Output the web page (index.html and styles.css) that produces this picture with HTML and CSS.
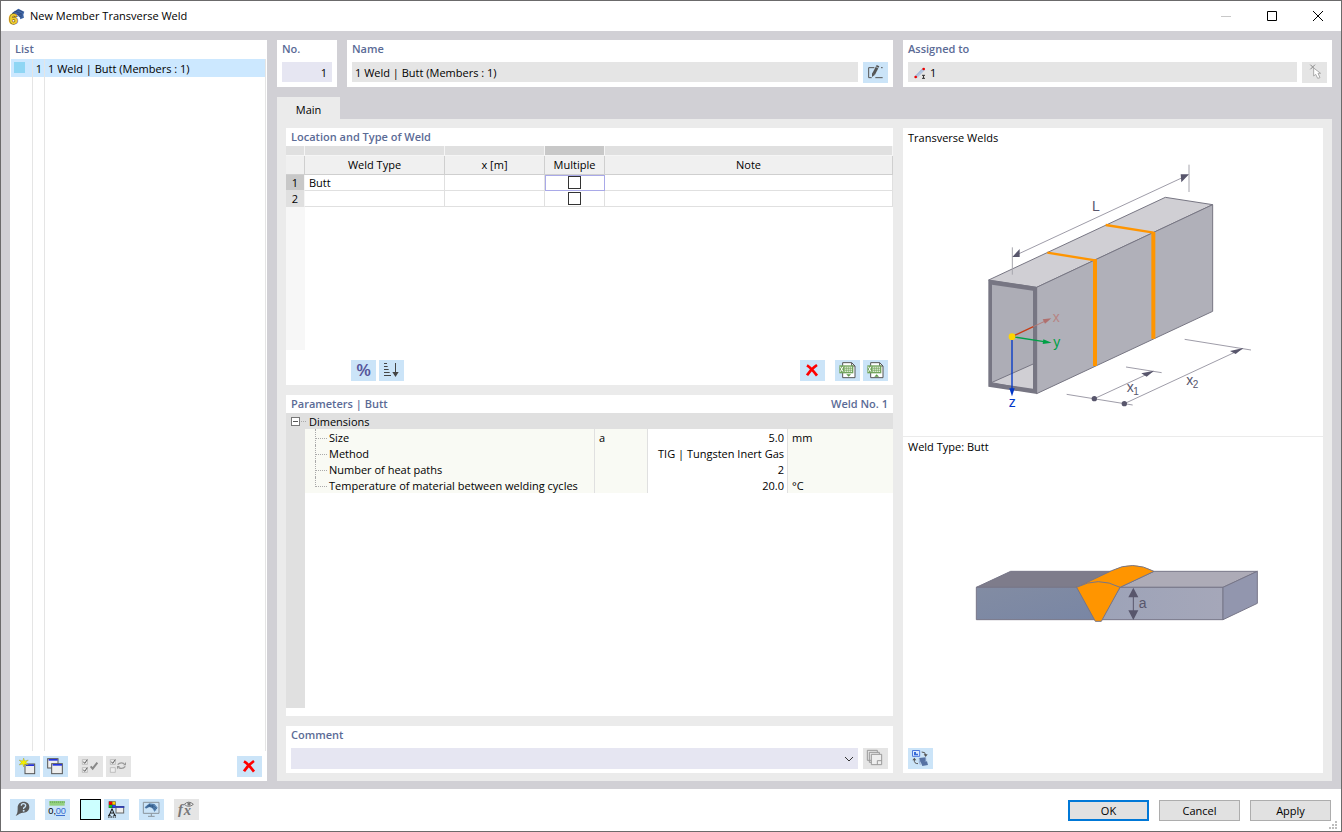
FILE: index.html
```html
<!DOCTYPE html>
<html lang="en">
<head>
  <meta charset="UTF-8" />
  <meta name="viewport" content="width=device-width, initial-scale=1.0" />
  <title>New Member Transverse Weld</title>
  <link rel="stylesheet" href="styles.css">
</head>
<body>

<!-- shared icon shapes, 3 units per pixel -->
<svg class="defs" width="0" height="0" aria-hidden="true">
  <symbol id="iconDelete" viewBox="0 0 75 63">
    <path d="M21 16Q34 24 51 47M51 15Q34 26 21 46" fill="none" stroke="#f00" stroke-width="8"/>
  </symbol>
  <symbol id="iconSheet" viewBox="0 0 75 63">
    <path d="M23 8H50L60 18V53H23Z" fill="#fff" stroke="#555" stroke-width="3"/>
    <path d="M50 8V18H60" fill="none" stroke="#555" stroke-width="3"/>
    <rect x="13" y="16" width="42" height="24" fill="#72a45c"/>
    <path d="M16 20L24 35M24 20L16 35" stroke="#fff" stroke-width="3"/>
    <path d="M29 20H51V36H29Z" fill="#e6f2df"/>
    <path d="M34 20V36M40 20V36M46 20V36M29 25H51M29 31H51" stroke="#72a45c" stroke-width="2"/>
  </symbol>
</svg>

<div class="window">

  <header class="titlebar">
    <svg class="app-icon" viewBox="0 0 48 48" aria-hidden="true">
      <path d="M9 15L28 2L46 11L43 20L45 29L34 34Q32 18 9 19Z" fill="#4169aa"/>
      <path d="M12 14L30 6L42 13M24 18L40 22M27 23L40 28M17 10L39 18" fill="none" stroke="#28406e" stroke-width="2"/>
      <text x="1" y="47" class="app-digit">6</text>
    </svg>
    <h1>New Member Transverse Weld</h1>
    <div class="window-buttons">
      <button type="button" aria-label="Minimize" disabled><svg viewBox="0 0 10 10"><path d="M0 5.5H10" stroke="#c8c8c8"/></svg></button>
      <button type="button" aria-label="Maximize"><svg viewBox="0 0 10 10"><path d="M.5 .5H9.5V9.5H.5Z" fill="none" stroke="#000"/></svg></button>
      <button type="button" aria-label="Close"><svg viewBox="0 0 10 10"><path d="M0 0L10 10M10 0L0 10" stroke="#000"/></svg></button>
    </div>
  </header>

  <main class="content">

    <section class="panel list-panel">
      <h2>List</h2>
      <div class="list">
        <div class="list-row selected">
          <span class="swatch-cell"><span class="swatch"></span></span>
          <span class="list-no">1</span>
          <span class="list-name">1 Weld | Butt (Members : 1)</span>
        </div>
        <div class="list-row filler"><span class="swatch-cell"></span><span class="list-no"></span><span class="list-name"></span></div>
      </div>
      <div class="toolbar">
        <button type="button" class="tool" aria-label="New"><svg viewBox="0 0 75 63">
          <rect x="30" y="24" width="29" height="29" fill="#eee" stroke="#555" stroke-width="3"/>
          <path d="M33 27.500H57" stroke="#2434e0" stroke-width="5"/>
          <path d="M26 6L29 15L40 12L33 19L40 27L29 24L26 33L23 24L12 27L19 19L12 12L23 15Z" fill="#f4f000" stroke="#8c8a30" stroke-width="1"/>
        </svg></button>
        <button type="button" class="tool" aria-label="Copy"><svg viewBox="0 0 75 63">
          <rect x="14" y="8" width="31" height="28" fill="#eee" stroke="#555" stroke-width="3"/>
          <path d="M17 11.500H44" stroke="#2434e0" stroke-width="5"/>
          <rect x="26" y="23" width="32" height="30" fill="#eee" stroke="#555" stroke-width="3"/>
          <path d="M29 26.500H57" stroke="#2434e0" stroke-width="5"/>
        </svg></button>
        <button type="button" class="tool off push" aria-label="Select all" disabled><svg viewBox="0 0 75 63">
          <path d="M13 11H28V25H13ZM13 35H28V49H13Z" fill="#eee" stroke="#aaa" stroke-width="2"/>
          <path d="M16 17L20 22L28 11M16 41L20 46L28 35" fill="none" stroke="#555" stroke-width="3"/>
          <path d="M38 31L44 38L58 20" fill="none" stroke="#888" stroke-width="6"/>
        </svg></button>
        <button type="button" class="tool off" aria-label="Invert selection" disabled><svg viewBox="0 0 75 63">
          <path d="M13 11H28V25H13ZM13 35H28V49H13Z" fill="#eee" stroke="#aaa" stroke-width="2"/>
          <path d="M16 17L20 22L28 11" fill="none" stroke="#555" stroke-width="3"/>
          <path d="M35 26Q43 17 54 23M58 31Q50 41 38 35" fill="none" stroke="#999" stroke-width="4"/>
          <path d="M51 28H60V18ZM42 30H33V40Z" fill="#999"/>
        </svg></button>
        <button type="button" class="tool last" aria-label="Delete"><svg><use href="#iconDelete"/></svg></button>
      </div>
    </section>

    <div class="detail">

      <div class="fields">
        <section class="panel field">
          <h2><label for="no">No.</label></h2>
          <div class="field-row"><input type="text" id="no" class="box number" value="1"></div>
        </section>
        <section class="panel field">
          <h2><label for="name">Name</label></h2>
          <div class="field-row">
            <input type="text" id="name" class="box readonly" value="1 Weld | Butt (Members : 1)" readonly>
            <button type="button" class="tool" aria-label="Edit name"><svg viewBox="0 0 75 63">
              <path d="M34 17H17V47H26M37 47H59M54 17H59" fill="none" stroke="#555" stroke-width="3"/>
              <path d="M32 36L45 11" stroke="#555" stroke-width="9"/>
              <path d="M27 32L36 38L27 45Z" fill="#555"/>
              <path d="M38 14L48 19" stroke="#cbe4f8" stroke-width="2"/>
            </svg></button>
          </div>
        </section>
        <section class="panel field">
          <h2><label for="assigned">Assigned to</label></h2>
          <div class="field-row">
            <div class="box readonly with-icon">
              <svg class="member-icon" viewBox="0 0 42 42" aria-hidden="true">
                <path d="M9 33L33 9" stroke="#b4c6e0" stroke-width="9"/>
                <path d="M9 29L29 8" stroke="#8aa3c8" stroke-width="2"/>
                <circle cx="8" cy="33" r="4" fill="#e00"/><circle cx="32" cy="9" r="4" fill="#e00"/>
                <path d="M27 28H36M27 37H36M31.500 28V37" stroke="#333" stroke-width="3"/>
              </svg>
              <input type="text" id="assigned" value="1" readonly>
            </div>
            <button type="button" class="tool off" aria-label="Select in model" disabled><svg viewBox="0 0 75 63">
              <path d="M25 8L39 22M39 8L25 22" stroke="#888" stroke-width="3"/>
              <path d="M35 18V42L41 37L47 49L54 47L48 34H56Z" fill="#fff" stroke="#aaa" stroke-width="3"/>
            </svg></button>
          </div>
        </section>
      </div>

      <nav class="tabs"><button type="button" class="tab">Main</button></nav>

      <div class="tab-page">

        <div class="column">
          <section class="panel">
            <h2 class="tight">Location and Type of Weld</h2>
            <div class="grid-area">
              <table class="weld-table">
                <colgroup><col class="c-row"><col class="c-type"><col class="c-x"><col class="c-multi"><col></colgroup>
                <thead>
                  <tr class="strip"><td></td><td></td><td></td><td class="active"></td><td></td></tr>
                  <tr><th></th><th>Weld Type</th><th>x [m]</th><th>Multiple</th><th>Note</th></tr>
                </thead>
                <tbody>
                  <tr><th class="active">1</th><td>Butt</td><td></td><td class="check current"><input type="checkbox" aria-label="Multiple, row 1"></td><td></td></tr>
                  <tr><th>2</th><td></td><td></td><td class="check"><input type="checkbox" aria-label="Multiple, row 2"></td><td></td></tr>
                </tbody>
              </table>
            </div>
            <div class="toolbar table-tools">
              <button type="button" class="tool percent" aria-label="Relative">%</button>
              <button type="button" class="tool" aria-label="Sort"><svg viewBox="0 0 75 63">
                <path d="M15 10.500H24M15 19.500H26M15 28.500H29M15 37.500H32M15 46.500H36" stroke="#444" stroke-width="3"/>
                <path d="M49.500 9V42" stroke="#444" stroke-width="3"/><path d="M40 36H59L49.500 51Z" fill="#444"/>
              </svg></button>
              <button type="button" class="tool last" aria-label="Delete row"><svg><use href="#iconDelete"/></svg></button>
              <button type="button" class="tool push" aria-label="Export table"><svg viewBox="0 0 75 63"><use href="#iconSheet"/><path d="M34 43H48L41 50Z" fill="#5d9646"/></svg></button>
              <button type="button" class="tool" aria-label="Import table"><svg viewBox="0 0 75 63"><use href="#iconSheet"/><path d="M34 50H48L41 43Z" fill="#5d9646"/></svg></button>
            </div>
          </section>

          <section class="panel params">
            <h2 class="tight">Parameters | Butt <span>Weld No. 1</span></h2>
            <div class="params-area">
              <div class="group">
                <button type="button" class="collapse" aria-label="Collapse"></button>
                <span class="dots"></span>Dimensions
              </div>
              <table class="param-table">
                <colgroup><col><col class="c-symbol"><col class="c-value"><col class="c-unit"></colgroup>
                <tbody>
                  <tr><th>Size</th><td>a</td><td class="value">5.0</td><td>mm</td></tr>
                  <tr><th>Method</th><td></td><td class="value">TIG | Tungsten Inert Gas</td><td></td></tr>
                  <tr><th>Number of heat paths</th><td></td><td class="value">2</td><td></td></tr>
                  <tr><th>Temperature of material between welding cycles</th><td></td><td class="value">20.0</td><td>°C</td></tr>
                </tbody>
              </table>
            </div>
          </section>

          <section class="panel comment">
            <h2><label for="comment">Comment</label></h2>
            <div class="field-row">
              <div class="combo">
                <select id="comment"><option></option></select>
                <svg class="chevron" viewBox="0 0 10 6" aria-hidden="true"><path d="M1 1L5 5L9 1" fill="none" stroke="#333"/></svg>
              </div>
              <button type="button" class="tool off" aria-label="Comment templates" disabled><svg viewBox="0 0 75 63">
                <path d="M24 37H13V7H43V13M28 43H19V13H49V19" fill="none" stroke="#999" stroke-width="3"/>
                <path d="M25 19H56V50H25Z" fill="#eee" stroke="#999" stroke-width="3"/>
                <path d="M43 50V38H56" fill="none" stroke="#999" stroke-width="3"/>
              </svg></button>
            </div>
          </section>
        </div>

        <section class="panel pictures">
          <div class="picture top-picture">
            <h3>Transverse Welds</h3>
            <svg class="member-drawing" viewBox="-21 0 900 810" role="img" aria-label="Member with transverse welds">
              <g stroke="#777683" stroke-width="3" stroke-linejoin="round">
                <path d="M56 390L586 142L728 164L200 412Z" fill="#d0cfd4"/>
                <path d="M200 412L728 164V484L200 731Z" fill="#b0b0b9"/>
                <path d="M60 398L194 416V724L60 706Z" fill="#adadb6"/>
                <path d="M64 698L194 640V722Z" fill="#d0cfd4"/>
              </g>
              <path d="M55 389L201 411V732L55 710ZM66 404V699L189 716V422Z" fill="#777683" fill-rule="evenodd"/>
              <g fill="none" stroke="#ff9500">
                <path d="M232 308L376 331M407 225L551 248" stroke-width="7"/>
                <path d="M375 328V648M550 246V566" stroke-width="12"/>
              </g>
              <g fill="none" stroke="#a7a6ae" stroke-width="3">
                <path d="M127 292V374M657 44V126"/>
              </g>
              <g fill="none" stroke="#6c6a7b" stroke-width="2">
                <path d="M132 318L652 76"/>
                <path d="M290 733L488 765M468 651L575 668M644 568L843 600"/>
                <path d="M373 746L548 665M463 761L818 596"/>
              </g>
              <g fill="#58566c">
                <path d="M127 321L149 297V321ZM657 73L632 73L634 97Z"/>
                <path d="M552 662L514 670L530 680ZM820 594L780 603L797 612Z"/>
                <circle cx="373" cy="746" r="8"/><circle cx="463" cy="761" r="8"/>
              </g>
              <path d="M126 560L190 530" stroke="#c83c14" stroke-width="4"/>
              <path d="M190 530L226 513" stroke="#b47a78" stroke-width="3"/><path d="M244 505L218 508L225 521Z" fill="#b0706e"/>
              <path d="M126 560L222 575" stroke="#00a046" stroke-width="4"/><path d="M245 578L220 568L218 582Z" fill="#00a046"/>
              <path d="M126 560V720" stroke="#0037c8" stroke-width="4"/><path d="M126 739L118 715H134Z" fill="#0037c8"/>
              <circle cx="126" cy="560" r="10" fill="#ffd500"/>
              <g class="label">
                <text x="366" y="184">L</text>
                <text x="470" y="727">x</text><text x="490" y="736" class="sub">1</text>
                <text x="649" y="704">x</text><text x="668" y="713" class="sub">2</text>
                <text x="248" y="515" class="axis" fill="#b78583">x</text>
                <text x="250" y="592" class="axis" fill="#00a046">y</text>
                <text x="116" y="770" class="axis" fill="#0037c8">z</text>
              </g>
            </svg>
          </div>
          <div class="picture bottom-picture">
            <h3>Weld Type: Butt</h3>
            <svg class="weld-drawing" viewBox="-6 33 930 300" role="img" aria-label="Butt weld section">
              <defs>
                <linearGradient id="leftFace" x1="0" y1="0" x2="1" y2="1"><stop offset="0" stop-color="#828ca3"/><stop offset="1" stop-color="#7986a4"/></linearGradient>
                <linearGradient id="rightFace" x1="0" y1="0" x2="1" y2="0"><stop offset="0" stop-color="#9da3b8"/><stop offset="1" stop-color="#a5a7b9"/></linearGradient>
              </defs>
              <g stroke="#777688" stroke-width="3" stroke-linejoin="round">
                <path d="M49 142L152 94H470L350 142Z" fill="#7e7c8b"/>
                <path d="M49 142H350L408 239H49Z" fill="url(#leftFace)"/>
                <path d="M480 142L582 94H892L789 142Z" fill="#adabb7"/>
                <path d="M480 142H789V239H424Z" fill="url(#rightFace)"/>
                <path d="M789 142L892 94V190L789 239Z" fill="#9296ae"/>
                <path d="M350 142L455 92Q518 60 582 94L480 142Z" fill="#ff9500"/>
                <path d="M350 142Q415 108 480 142L424 244H406Z" fill="#ff9500"/>
              </g>
              <path d="M520 165V218" stroke="#58566c" stroke-width="3"/>
              <path d="M520 143L535 172H505ZM520 240L535 211H505Z" fill="#58566c"/>
              <text x="536" y="203" class="size-label">a</text>
            </svg>
          </div>
          <div class="toolbar">
            <button type="button" class="tool" aria-label="Switch picture"><svg viewBox="0 0 75 63">
              <path d="M13.500 7.500H35V25H13.500Z" fill="#dcebff" stroke="#4c78dc" stroke-width="3"/>
              <path d="M18 12H24V17H30V22H18Z" fill="#3469d8"/>
              <path d="M41 12Q53 11 53 22M30 47Q18 47 19 36" fill="none" stroke="#555" stroke-width="3"/>
              <path d="M47 19H59L53 27ZM13 37H25L19 29Z" fill="#555"/>
              <path d="M33 30L53 28V40L37 43ZM38 42L57 40L60 51L43 54Z" fill="#5571a3"/>
              <path d="M33 30L37 43V51L33 43ZM53 28L57 40" fill="#9bb0d4" stroke="#9bb0d4"/>
            </svg></button>
          </div>
        </section>

      </div>
    </div>
  </main>

  <footer class="footer">
    <button type="button" class="tool" aria-label="Help"><svg viewBox="0 0 75 63">
      <path d="M41 8C52 8 58 15 58 24C58 34 51 41 40 41C34 41 30 43 17 51C23 43 23 38 23 25C23 15 31 8 41 8Z" fill="#58595b"/>
      <path d="M34 20Q34 14 40 14Q47 14 47 20Q47 23 41 27V30" fill="none" stroke="#cbe4f8" stroke-width="4"/><circle cx="41" cy="35" r="3" fill="#cbe4f8"/>
    </svg></button>
    <button type="button" class="tool push" aria-label="Units and decimal places"><svg viewBox="0 0 75 63">
      <rect x="13" y="6" width="46" height="14" fill="#94d180"/>
      <path d="M16 7V12M22 7V12M28 7V12M34 7V12M40 7V12M46 7V12M52 7V12M58 7V12" stroke="#5a9a4c" stroke-width="2"/>
      <text x="10" y="45" class="digits">0,</text><text x="32" y="45" class="digits blue">00</text>
      <path d="M33 49.500H60" stroke="#3b6fd0" stroke-width="3"/>
    </svg></button>
    <button type="button" class="color push" aria-label="Color"></button>
    <button type="button" class="tool" aria-label="Display properties"><svg viewBox="0 0 75 63">
      <path d="M14 7H35V27H14Z" fill="#333"/>
      <path d="M15 8H24V17H15Z" fill="#e00"/><path d="M25 8H34V17H25Z" fill="#fc0"/><path d="M15 18H24V26H15Z" fill="#00c820"/><path d="M25 18H34V26H25Z" fill="#24e"/>
      <path d="M16 48L24 29L32 48M19 42H29M12 49H20M28 49H36" fill="none" stroke="#111" stroke-width="3"/>
      <path d="M12 54H36" stroke="#111" stroke-width="3" stroke-dasharray="5 2"/>
      <rect x="36" y="23" width="23" height="19" fill="#eee" stroke="#666" stroke-width="3"/><path d="M34 24H61" stroke="#2434b0" stroke-width="5"/>
    </svg></button>
    <button type="button" class="tool push" aria-label="View"><svg viewBox="0 0 75 63">
      <path d="M13 10H60V43H13Z" fill="#cbe4f8" stroke="#8a939c" stroke-width="3"/>
      <path d="M17 25L31 13L47 15L56 26L53 30L46 39Q42 26 31 24L21 29Z" fill="#5b86b4"/>
      <path d="M20 25Q40 17 50 34M25 20Q44 16 53 30M31 15L34 22M42 16L40 25" fill="none" stroke="#28527e" stroke-width="2"/>
      <path d="M37 44V51M27 52H47" stroke="#8a939c" stroke-width="3"/>
    </svg></button>
    <button type="button" class="tool off push" aria-label="Formula" disabled><svg viewBox="0 0 75 63">
      <text x="12" y="46" class="formula">f</text><text x="29" y="47" class="formula">x</text>
      <path d="M31 16Q44 3 58 16Q44 28 31 16Z" fill="#eee" stroke="#777" stroke-width="3"/><circle cx="45" cy="15" r="5" fill="#777"/>
    </svg></button>
    <div class="actions">
      <button type="button" class="action primary">OK</button>
      <button type="button" class="action">Cancel</button>
      <button type="button" class="action">Apply</button>
    </div>
    <svg class="grip" viewBox="0 0 8 8" aria-hidden="true"><path d="M6 0H8V2H6ZM3 3H5V5H3ZM6 3H8V5H6ZM0 6H2V8H0ZM3 6H5V8H3ZM6 6H8V8H6Z" fill="#bdbdbd"/></svg>
  </footer>

</div>

</body>
</html>
```
FILE: styles.css
```css
* {
  box-sizing: border-box;
}
html, body {
  margin: 0;
  padding: 0;
  height: 100%;
}
body {
  font-family: "Open Sans", "Noto Sans", sans-serif;
  font-size: 11px;
  line-height: 16px;
  color: #000;
}
button, input, select {
  font: inherit;
  color: inherit;
  margin: 0;
  padding: 0;
  border: none;
  border-radius: 0;
}
svg {
  display: block;
}
h1, h2, h3 {
  margin: 0;
  font-size: 11px;
  font-weight: normal;
}
.defs {
  position: absolute;
}
.window {
  display: flex;
  flex-direction: column;
  min-height: 100vh;
  border: 1px solid #6b6a6b;
  background: #fff;
}

/* Title bar */
.titlebar {
  display: flex;
  align-items: center;
  height: 30px;
  padding-left: 8px;
}
.app-icon {
  width: 16px;
  height: 16px;
  overflow: visible;
}
.app-digit {
  font: bold 46px "Liberation Sans", sans-serif;
  fill: #f0cc30;
  stroke: #7a6414;
  stroke-width: 4px;
  paint-order: stroke;
}
.titlebar h1 {
  margin-left: 5px;
}
.window-buttons {
  display: flex;
  margin-left: auto;
}
.window-buttons button {
  display: flex;
  align-items: center;
  justify-content: center;
  width: 46px;
  height: 30px;
  background: none;
}
.window-buttons svg {
  width: 10px;
  height: 10px;
}

/* Panels */
.content {
  flex: 1;
  display: flex;
  gap: 10px;
  padding: 9px 9px 8px;
  background: #d1d0d5;
}
.panel {
  background: #fff;
}
.panel h2 {
  height: 19px;
  padding: 1px 5px;
  font-weight: 600;
  color: #5b6b96;
}
.panel h2.tight {
  display: flex;
  justify-content: space-between;
  height: 18px;
}
.toolbar {
  display: flex;
  gap: 3px;
  padding: 5px 5px 4px;
}
.tool {
  display: block;
  flex: none;
  width: 25px;
  height: 21px;
  background: #cbe4f8;
}
.tool svg {
  width: 25px;
  height: 21px;
}
.tool.off {
  background: #e5e5e5;
}
.toolbar .push {
  margin-left: 7px;
}
.toolbar .last {
  margin-left: auto;
}

/* List */
.list-panel {
  display: flex;
  flex-direction: column;
  width: 257px;
  flex: none;
}
.list {
  flex: 1;
  display: flex;
  flex-direction: column;
  margin: 0 1px;
}
.list-row {
  display: flex;
  height: 18px;
  line-height: 20px;
}
.list-row.filler {
  flex: 1;
}
.list-row.selected {
  background: #cce8ff;
}
.list-row span {
  border-right: 1px solid #e5e5e5;
}
.swatch-cell {
  width: 22px;
  padding: 3px;
}
.list-row .swatch {
  display: block;
  width: 11px;
  height: 11px;
  border: none;
  background: #8fd6f4;
}
.list-no {
  width: 12px;
  text-align: right;
  padding-right: 2px;
}
.list-name {
  flex: 1;
  padding-left: 3px;
}

/* Fields above the tab */
.detail {
  flex: 1;
  min-width: 0;
  display: flex;
  flex-direction: column;
}
.fields {
  display: grid;
  grid-template-columns: 60px minmax(0, 546fr) minmax(0, 429fr);
  gap: 10px;
}
.field {
  height: 47px;
}
.field h2 {
  height: 22px;
}
.field-row {
  display: flex;
  gap: 5px;
  padding: 0 5px;
}
.box {
  flex: 1;
  min-width: 0;
  height: 20px;
  padding: 0 3px;
}
.number {
  background: #e6e6f2;
  text-align: right;
  padding-right: 5px;
}
.readonly {
  background: #e5e5e5;
}
.with-icon {
  display: flex;
  align-items: center;
  gap: 3px;
  padding: 2px 5px 0;
}
.with-icon input {
  flex: 1;
  min-width: 0;
  background: none;
}
.member-icon {
  width: 14px;
  height: 14px;
}

/* Tab */
.tabs {
  display: flex;
  margin-top: 10px;
}
.tab {
  width: 63px;
  height: 22px;
  padding-top: 4px;
  background: #ebebeb;
}
.tab-page {
  flex: 1;
  display: grid;
  grid-template-columns: minmax(0, 607fr) minmax(0, 420fr);
  gap: 10px;
  padding: 9px 9px 8px;
  background: #ebebeb;
}
.column {
  display: flex;
  flex-direction: column;
  gap: 10px;
}

/* Weld table */
.grid-area {
  height: 204px;
  background: linear-gradient(to right, #f7f7f7 19px, #fff 19px);
}
table {
  width: 100%;
  table-layout: fixed;
  border-collapse: separate;
  border-spacing: 0;
}
th, td {
  padding: 0;
  height: 16px;
  font-weight: normal;
  overflow: hidden;
  white-space: nowrap;
}
.c-row {
  width: 19px;
}
.c-type {
  width: 140px;
}
.c-x {
  width: 100px;
}
.c-multi {
  width: 60px;
}
.weld-table td {
  padding-left: 4px;
  line-height: 15px;
  border-right: 1px solid #e0e0e0;
  border-bottom: 1px solid #e0e0e0;
}
.weld-table thead th {
  height: 19px;
  background: #f0f0f0;
  border-right: 1px solid #cfcfcf;
  border-bottom: 1px solid #cfcfcf;
}
.weld-table .strip td {
  height: 10px;
  background: #e0e0e0;
  border-color: #f5f5f5;
}
.weld-table .strip .active,
.weld-table tbody .active {
  background: #c8c8c8;
}
.weld-table tbody th {
  line-height: 15px;
  background: #e0e0e0;
  border-right: 1px solid #f5f5f5;
  border-bottom: 1px solid #e0e0e0;
}
.weld-table .check {
  padding: 0;
}
.weld-table .current {
  outline: 1px solid #a9a9e8;
  outline-offset: -1px;
}
.check input {
  appearance: none;
  display: block;
  width: 13px;
  height: 13px;
  margin: 0 auto;
  border: 1px solid #333;
  background: #fff;
}
.table-tools {
  padding: 10px 5px 4px 65px;
}
.percent {
  font: bold 16px/21px "Liberation Sans", sans-serif;
  color: #55559a;
}

/* Parameters */
.params {
  flex: 1;
  display: flex;
  flex-direction: column;
  padding-bottom: 8px;
}
.params-area {
  flex: 1;
  background: linear-gradient(to right, #e0e0e0 19px, #fff 19px);
}
.group {
  display: flex;
  align-items: center;
  height: 16px;
  padding: 1px 0 0 5px;
  background: #e0e0e0;
}
.collapse {
  width: 9px;
  height: 9px;
  border: 1px solid #777;
  background: linear-gradient(#555, #555) center / 5px 1px no-repeat #fff;
}
.dots {
  width: 5px;
  margin: 0 3px 0 1px;
  border-top: 1px dotted #aaa;
}
.param-table {
  width: calc(100% - 19px);
  margin-left: 19px;
  background: #f9faf4;
}
.param-table th,
.param-table td {
  padding: 1px 3px 0 4px;
  line-height: 15px;
  border-right: 1px solid #e0e0e0;
}
.c-symbol {
  width: 53px;
}
.c-value {
  width: 140px;
}
.c-unit {
  width: 105px;
}
.param-table th {
  position: relative;
  padding-left: 24px;
  text-align: left;
}
.param-table th::before {
  content: "";
  position: absolute;
  left: 10px;
  top: 0;
  width: 11px;
  height: 9px;
  border-left: 1px dotted #aaa;
  border-bottom: 1px dotted #aaa;
}
.param-table th::after {
  content: "";
  position: absolute;
  left: 10px;
  top: 9px;
  height: 7px;
  border-left: 1px dotted #aaa;
}
.param-table tr:last-child th::after {
  display: none;
}
.param-table td:last-child {
  border-right: none;
}
.param-table .value {
  text-align: right;
  background: #fff;
}

/* Comment */
.comment {
  height: 47px;
}
.comment h2 {
  height: 22px;
}
.combo {
  position: relative;
  flex: 1;
}
.combo select {
  appearance: none;
  display: block;
  width: 100%;
  height: 21px;
  background: #e6e6f2;
}
.chevron {
  position: absolute;
  right: 4px;
  top: 8px;
  width: 10px;
  height: 6px;
  pointer-events: none;
}

/* Pictures */
.pictures {
  display: flex;
  flex-direction: column;
}
.picture h3 {
  height: 22px;
  padding: 2px 5px;
}
.top-picture {
  padding-bottom: 16px;
  border-bottom: 1px solid #ebebeb;
}
.bottom-picture {
  flex: 1;
  display: flex;
  flex-direction: column;
}
.member-drawing {
  width: 300px;
  height: 270px;
  margin: 0 auto;
}
.weld-drawing {
  width: 310px;
  height: 100px;
  margin: auto;
}
.label text {
  font: 42px "Liberation Sans", sans-serif;
}
.label text:not(.axis) {
  fill: #58566c;
}
.label .sub {
  font-size: 30px;
}
.size-label {
  font: 42px "Liberation Sans", sans-serif;
  fill: #58566c;
}

/* Footer */
.footer {
  position: relative;
  display: flex;
  align-items: flex-start;
  gap: 3px;
  height: 42px;
  padding: 10px 10px 0 9px;
}
.footer .push {
  margin-left: 7px;
}
.color {
  width: 21px;
  height: 21px;
  border: 1px solid #000;
  background: #ccffff;
}
.digits {
  font: 28px "Liberation Sans", sans-serif;
}
.blue {
  fill: #3b6fd0;
}
.formula {
  font: italic bold 44px "Liberation Serif", serif;
  fill: #777;
}
.actions {
  display: flex;
  gap: 10px;
  margin: 1px 0 0 auto;
}
.action {
  width: 81px;
  height: 21px;
  border: 1px solid #adadad;
  background: #e1e1e1;
}
.action.primary {
  border: 2px solid #0078d7;
}
.grip {
  position: absolute;
  right: 4px;
  bottom: 2px;
  width: 8px;
  height: 8px;
}
```
